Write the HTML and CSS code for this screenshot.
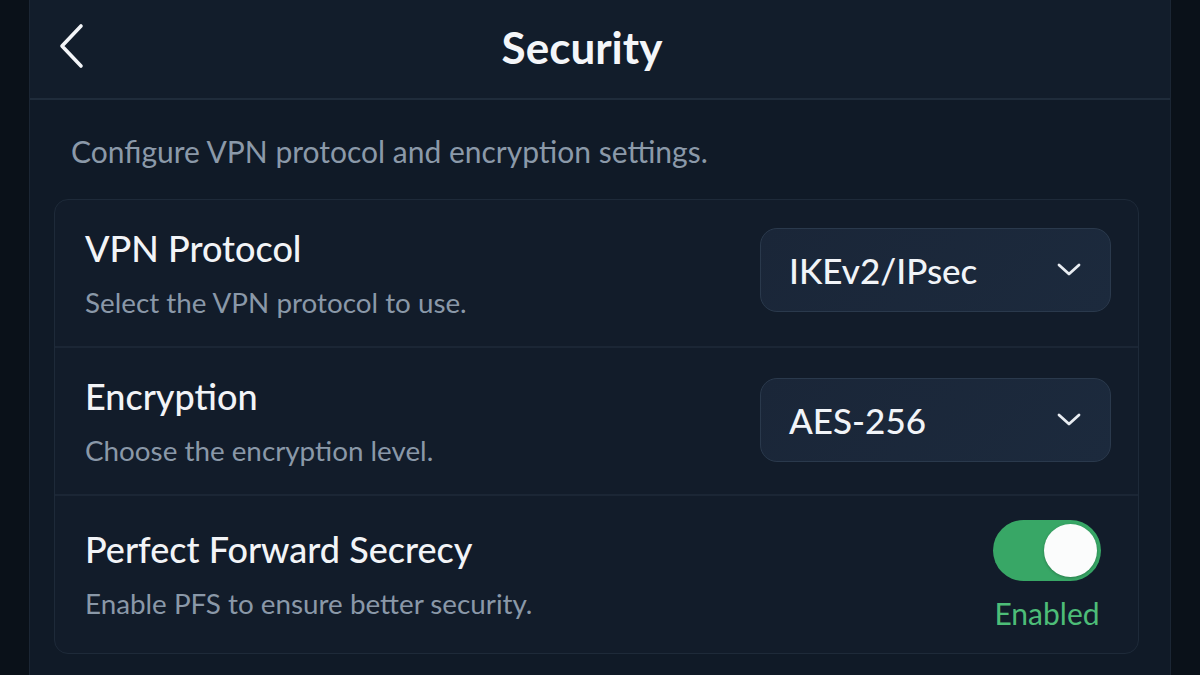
FILE: index.html
```html
<!DOCTYPE html>
<html>
<head>
<meta charset="utf-8">
<link rel="stylesheet" href="styles.css">
</head>
<body>
<div class="panel">
  <header class="header">
    <svg class="back" width="30" height="46" viewBox="0 0 30 46"><path d="M24 3 L5 23 L24 43" fill="none" stroke="#f3f5f8" stroke-width="3.6" stroke-linecap="round" stroke-linejoin="round"/></svg>
    <h1 class="title">Security</h1>
  </header>
  <main class="content">
    <p class="intro">Configure VPN protocol and encryption settings.</p>
    <section class="card">
      <div class="row">
        <div class="text">
          <div class="label">VPN Protocol</div>
          <div class="desc">Select the VPN protocol to use.</div>
        </div>
        <div class="select first">
          <span>IKEv2/IPsec</span>
          <svg width="26" height="16" viewBox="0 0 26 16"><path d="M3 3 L13 12 L23 3" fill="none" stroke="#e8ecf1" stroke-width="2.8" stroke-linecap="round" stroke-linejoin="round"/></svg>
        </div>
      </div>
      <div class="row">
        <div class="text">
          <div class="label">Encryption</div>
          <div class="desc">Choose the encryption level.</div>
        </div>
        <div class="select">
          <span>AES-256</span>
          <svg width="26" height="16" viewBox="0 0 26 16"><path d="M3 3 L13 12 L23 3" fill="none" stroke="#e8ecf1" stroke-width="2.8" stroke-linecap="round" stroke-linejoin="round"/></svg>
        </div>
      </div>
      <div class="row last">
        <div class="text">
          <div class="label">Perfect Forward Secrecy</div>
          <div class="desc">Enable PFS to ensure better security.</div>
        </div>
        <div class="toggle-wrap">
          <div class="toggle"><div class="knob"></div></div>
          <div class="status">Enabled</div>
        </div>
      </div>
    </section>
  </main>
</div>
</body>
</html>
```
FILE: styles.css
```css
* { box-sizing: border-box; }
html, body { margin: 0; height: 100%; }
body {
  background: #0a1119;
  font-family: Lato, "Noto Sans", sans-serif;
  overflow: hidden;
}
.panel {
  margin: 0 29px;
  height: 675px;
  background: #101a27;
  border-left: 1px solid #1b2634;
  border-right: 1px solid #1b2634;
}
.header {
  height: 100px;
  background: #121d2b;
  border-bottom: 2px solid #1f2c3b;
  display: flex;
  align-items: center;
  position: relative;
  padding-left: 27px;
}
.back { display: block; margin-top: -6px; }
.title {
  position: absolute;
  left: 0; right: 36px;
  top: 0;
  margin: 0;
  text-align: center;
  line-height: 94px;
  color: #f4f6f9;
  font-size: 44px;
  font-weight: 700;
  pointer-events: none;
}
.content { padding: 0 31px 0 24px; }
.intro {
  margin: 0;
  padding: 33px 0 0 17px;
  height: 99px;
  color: #8b99a9;
  font-size: 30px;
  line-height: 36px;
}
.card {
  background: #121c2a;
  border: 1px solid #1e2a39;
  border-radius: 14px;
  height: 455px;
}
.row {
  display: flex;
  align-items: center;
  justify-content: space-between;
  height: 148px;
  padding: 0 27px 0 30px;
  border-bottom: 2px solid #1b2635;
}
.row.last { border-bottom: none; height: 157px; }
.label {
  color: #f2f4f7;
  font-size: 36px;
  font-weight: 500;
  line-height: 40px;
}
.desc {
  color: #8a98a8;
  font-size: 27.8px;
  line-height: 32px;
  margin-top: 19px;
}
.select {
  width: 351px;
  height: 84px;
  border-radius: 17px;
  background: linear-gradient(135deg, #1a2638, #1c2a3d);
  border: 1px solid #2a394c;
  display: flex;
  align-items: center;
  justify-content: space-between;
  padding: 0 28px 0 28px;
  color: #f1f4f8;
  font-size: 35px;
  font-weight: 500;
  margin-top: -2px;
}
.select.first { margin-top: -6px; }
.toggle-wrap {
  display: flex;
  flex-direction: column;
  align-items: center;
  margin-right: 10px;
}
.toggle {
  width: 108px;
  height: 61px;
  border-radius: 31px;
  background: #38a766;
  position: relative;
}
.knob {
  position: absolute;
  right: 4px;
  top: 4px;
  width: 53px;
  height: 53px;
  border-radius: 50%;
  background: #fbfcfc;
  box-shadow: 0 1px 3px rgba(0,0,0,0.25);
}
.status {
  color: #4dbd78;
  font-size: 30px;
  line-height: 34px;
  margin-top: 15px;
}
```
